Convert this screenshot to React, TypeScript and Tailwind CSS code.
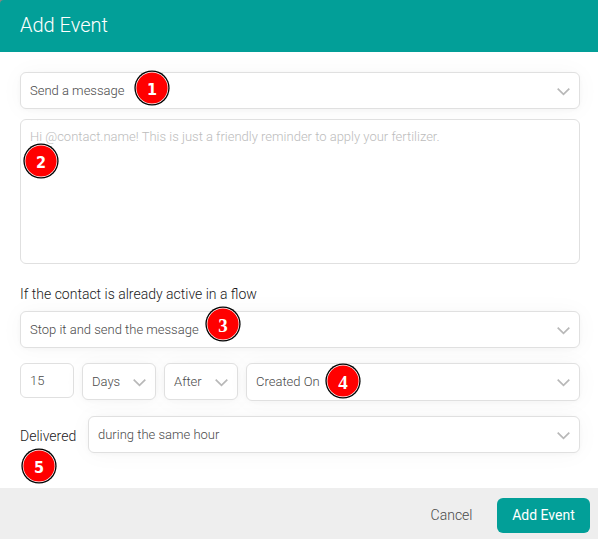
import React from "react";

function Chevron({ className = "" }: { className?: string }) {
  return (
    <svg className={`shrink-0 ${className}`} width="13" height="8" viewBox="0 0 13 8" fill="none" stroke="#b8b8b8" strokeWidth="1.7">
      <path d="M0.7 0.7 L6.5 6.4 L12.3 0.7" />
    </svg>
  );
}

function Select({ label, className = "" }: { label: string; className?: string }) {
  return (
    <div
      className={`flex h-[37px] items-center justify-between rounded-md border border-[#e0e0e0] bg-white px-[9px] text-[13px] text-[#4a4a4a] shadow-[0_1px_24px_rgba(0,0,0,0.035),0_1px_4px_rgba(0,0,0,0.03)] ${className}`}
    >
      <span className="whitespace-nowrap">{label}</span>
      <Chevron className="mt-0.5" />
    </div>
  );
}

function Badge({ n, className, serif = false }: { n: number; className: string; serif?: boolean }) {
  return (
    <div className={`absolute size-9 ${className}`}>
      <svg className="absolute inset-0" width="36" height="36" viewBox="0 0 36 36">
        <circle cx="18" cy="18" r="17.6" fill="#000" />
        <circle cx="18" cy="18" r="16.3" fill="#fff" />
        <circle cx="18" cy="18" r="15.6" fill="#f00" />
      </svg>
      <div
        className={`relative flex size-full items-center justify-center pt-[3px] leading-none font-bold text-white ${
          serif ? "font-['Liberation_Serif',serif] text-[19px]" : "font-['DejaVu_Sans_Condensed','DejaVu_Sans',sans-serif] text-[16px]"
        }`}
      >
        {n}
      </div>
    </div>
  );
}

export default function App() {
  return (
    <div className="relative flex h-[539px] w-[598px] flex-col overflow-hidden bg-white font-[Roboto,sans-serif] font-light">
      <header className="relative z-10 h-[52px] shrink-0 bg-[#8b8580]">
        <div className="flex h-full items-center rounded-tl bg-[#029f98] pb-0.5 pl-5 text-[20px] text-white">Add Event</div>
      </header>
      <main className="flex flex-1 flex-col px-[20px] pt-5 pr-[18px]">
        <Select label="Send a message" />
        <div className="relative mt-2.5 h-[145px] rounded-md border border-[#e0e0e0] bg-white px-[9px] pt-[7px] text-[13px] leading-5 text-[#bcbcbc]">
          Hi @contact.name! This is just a friendly reminder to apply your fertilizer.
        </div>
        <div className="mt-5 h-[27px] text-[14px] leading-5 text-[#1a1a1a]">If the contact is already active in a flow</div>
        <Select label="Stop it and send the message" />
        <div className="mt-[15px] flex items-start gap-2">
          <div className="flex h-[35px] w-[54px] items-center rounded-md border border-[#e0e0e0] bg-white pl-[9px] text-[13px] text-[#4a4a4a]">15</div>
          <Select label="Days" className="w-[74px]" />
          <Select label="After" className="w-[74px]" />
          <Select label="Created On" className="h-[38px]! flex-1" />
        </div>
        <div className="mt-[15px] flex items-center">
          <div className="w-[68px] pt-[3px] text-[14px] text-[#1a1a1a]">Delivered</div>
          <Select label="during the same hour" className="flex-1" />
        </div>
      </main>
      <footer className="relative flex h-[51px] shrink-0 items-center justify-end bg-[#eee] pt-1 pr-2 text-[14px]">
        <span className="mr-[24.5px] text-[#4a4a4a]">Cancel</span>
        <button className="h-[35px] w-[93px] rounded-md bg-[#029f98] font-normal text-white">Add Event</button>
      </footer>
      <Badge n={1} className="top-[70px] left-[134px]" />
      <Badge n={2} className="top-[143px] left-[23px]" />
      <Badge n={3} serif className="top-[306px] left-[205px]" />
      <Badge n={4} serif className="top-[363px] left-[325px]" />
      <Badge n={5} className="top-[448px] left-[21px]" />
    </div>
  );
}
